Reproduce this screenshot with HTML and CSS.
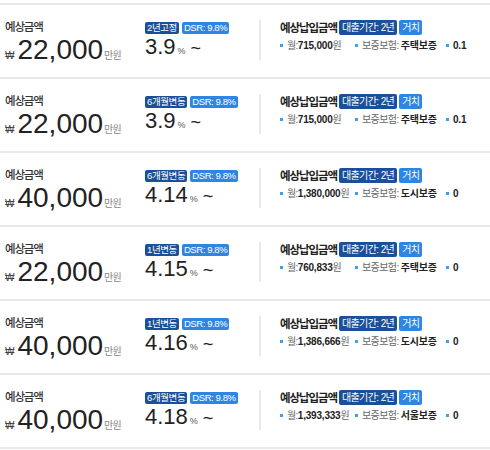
FILE: index.html
```html
<!DOCTYPE html>
<html lang="ko">
<head>
<meta charset="utf-8">
<link rel="stylesheet" href="styles.css">
</head>
<body>
<div class="list">
  <div class="row">
    <div class="amount">
      <div class="label">예상금액</div>
      <div class="num"><span class="won">₩</span><span class="big">22,000</span><span class="unit">만원</span></div>
    </div>
    <div class="rate">
      <div class="tags"><span class="tag dark">2년고정</span><span class="tag light">DSR: 9.8%</span></div>
      <div class="rnum"><span class="rv">3.9</span><span class="pct">%</span><span class="tilde">~</span></div>
    </div>
    <div class="pay">
      <div class="ptitle"><span class="pt">예상납입금액</span><span class="ptag dark">대출기간: 2년</span><span class="ptag light">거치</span></div>
      <div class="info"><span class="it w1"><i></i>월:<b>715,000</b>원</span><span class="it w2"><i></i>보증보험: <b>주택보증</b></span><span class="it"><i></i><b>0.1</b></span></div>
    </div>
  </div>
  <div class="row">
    <div class="amount">
      <div class="label">예상금액</div>
      <div class="num"><span class="won">₩</span><span class="big">22,000</span><span class="unit">만원</span></div>
    </div>
    <div class="rate">
      <div class="tags"><span class="tag dark">6개월변동</span><span class="tag light">DSR: 9.8%</span></div>
      <div class="rnum"><span class="rv">3.9</span><span class="pct">%</span><span class="tilde">~</span></div>
    </div>
    <div class="pay">
      <div class="ptitle"><span class="pt">예상납입금액</span><span class="ptag dark">대출기간: 2년</span><span class="ptag light">거치</span></div>
      <div class="info"><span class="it w1"><i></i>월:<b>715,000</b>원</span><span class="it w2"><i></i>보증보험: <b>주택보증</b></span><span class="it"><i></i><b>0.1</b></span></div>
    </div>
  </div>
  <div class="row">
    <div class="amount">
      <div class="label">예상금액</div>
      <div class="num"><span class="won">₩</span><span class="big">40,000</span><span class="unit">만원</span></div>
    </div>
    <div class="rate">
      <div class="tags"><span class="tag dark">6개월변동</span><span class="tag light">DSR: 9.8%</span></div>
      <div class="rnum"><span class="rv">4.14</span><span class="pct">%</span><span class="tilde">~</span></div>
    </div>
    <div class="pay">
      <div class="ptitle"><span class="pt">예상납입금액</span><span class="ptag dark">대출기간: 2년</span><span class="ptag light">거치</span></div>
      <div class="info"><span class="it w1"><i></i>월:<b>1,380,000</b>원</span><span class="it w2"><i></i>보증보험: <b>도시보증</b></span><span class="it"><i></i><b>0</b></span></div>
    </div>
  </div>
  <div class="row">
    <div class="amount">
      <div class="label">예상금액</div>
      <div class="num"><span class="won">₩</span><span class="big">22,000</span><span class="unit">만원</span></div>
    </div>
    <div class="rate">
      <div class="tags"><span class="tag dark">1년변동</span><span class="tag light">DSR: 9.8%</span></div>
      <div class="rnum"><span class="rv">4.15</span><span class="pct">%</span><span class="tilde">~</span></div>
    </div>
    <div class="pay">
      <div class="ptitle"><span class="pt">예상납입금액</span><span class="ptag dark">대출기간: 2년</span><span class="ptag light">거치</span></div>
      <div class="info"><span class="it w1"><i></i>월:<b>760,833</b>원</span><span class="it w2"><i></i>보증보험: <b>주택보증</b></span><span class="it"><i></i><b>0</b></span></div>
    </div>
  </div>
  <div class="row">
    <div class="amount">
      <div class="label">예상금액</div>
      <div class="num"><span class="won">₩</span><span class="big">40,000</span><span class="unit">만원</span></div>
    </div>
    <div class="rate">
      <div class="tags"><span class="tag dark">1년변동</span><span class="tag light">DSR: 9.8%</span></div>
      <div class="rnum"><span class="rv">4.16</span><span class="pct">%</span><span class="tilde">~</span></div>
    </div>
    <div class="pay">
      <div class="ptitle"><span class="pt">예상납입금액</span><span class="ptag dark">대출기간: 2년</span><span class="ptag light">거치</span></div>
      <div class="info"><span class="it w1"><i></i>월:<b>1,386,666</b>원</span><span class="it w2"><i></i>보증보험: <b>도시보증</b></span><span class="it"><i></i><b>0</b></span></div>
    </div>
  </div>
  <div class="row last">
    <div class="amount">
      <div class="label">예상금액</div>
      <div class="num"><span class="won">₩</span><span class="big">40,000</span><span class="unit">만원</span></div>
    </div>
    <div class="rate">
      <div class="tags"><span class="tag dark">6개월변동</span><span class="tag light">DSR: 9.8%</span></div>
      <div class="rnum"><span class="rv">4.18</span><span class="pct">%</span><span class="tilde">~</span></div>
    </div>
    <div class="pay">
      <div class="ptitle"><span class="pt">예상납입금액</span><span class="ptag dark">대출기간: 2년</span><span class="ptag light">거치</span></div>
      <div class="info"><span class="it w1"><i></i>월:<b>1,393,333</b>원</span><span class="it w2"><i></i>보증보험: <b>서울보증</b></span><span class="it"><i></i><b>0</b></span></div>
    </div>
  </div>
</div>
</body>
</html>
```
FILE: styles.css
```css
html, body {
  margin: 0;
  padding: 0;
  background: #fff;
}
body {
  font-family: "Liberation Sans", "Noto Sans CJK KR", sans-serif;
  color: #222;
  width: 490px;
  overflow: hidden;
}
.list {
  padding-top: 3px;
}
.row {
  display: flex;
  height: 72px;
  border-top: 2px solid #e8e8e8;
}
.row.last {
  border-bottom: 2px solid #e8e8e8;
}
.amount {
  width: 140px;
  padding-left: 5px;
  padding-top: 14px;
}
.label {
  font-size: 11.5px;
  letter-spacing: -1.2px;
  color: #333;
  font-weight: 500;
  line-height: 16px;
}
.num {
  display: flex;
  align-items: baseline;
  margin-top: -2px;
  line-height: 34px;
}
.won {
  font-size: 10px;
  color: #444;
  margin-right: 3px;
}
.big {
  font-size: 28px;
  color: #222;
}
.unit {
  font-size: 10px;
  color: #888;
  letter-spacing: -0.8px;
  margin-left: 1px;
}
.rate {
  width: 114px;
  padding-top: 17px;
}
.tags {
  display: flex;
  gap: 3px;
}
.tag, .ptag {
  color: #fff;
  border-radius: 2px;
}
.tag {
  font-size: 9.5px;
  line-height: 12px;
  padding: 0 2px;
  letter-spacing: -0.4px;
}
.dark {
  background: #1b4f98;
}
.light {
  background: #2f86e2;
}
.rnum {
  display: flex;
  align-items: baseline;
  line-height: 26px;
}
.rv {
  font-size: 22px;
}
.pct {
  font-size: 9px;
  color: #555;
  margin-left: 2px;
}
.tilde {
  font-size: 18px;
  margin-left: 5px;
}
.pay {
  margin-top: 15px;
  height: 40px;
  border-left: 2px solid #e8e8e8;
  padding-left: 19px;
}
.ptitle {
  display: flex;
  align-items: center;
  gap: 2px;
  margin-top: -1px;
}
.pt {
  font-size: 11.5px;
  font-weight: 700;
  letter-spacing: -1.1px;
  color: #222;
}
.ptag {
  font-size: 10px;
  line-height: 15px;
  padding: 0 3px;
  letter-spacing: -0.6px;
}
.info {
  margin-top: 5px;
  font-size: 10px;
  line-height: 12px;
  color: #666;
  letter-spacing: -0.6px;
  white-space: nowrap;
}
.it {
  display: inline-block;
}
.it i {
  display: inline-block;
  width: 3px;
  height: 3px;
  background: #3ba2ea;
  margin-right: 4px;
  vertical-align: middle;
  position: relative;
  top: -1px;
}
.it b {
  color: #222;
  font-weight: 700;
  letter-spacing: -0.2px;
}
.w1 {
  width: 75px;
}
.w2 {
  width: 91px;
}
```
